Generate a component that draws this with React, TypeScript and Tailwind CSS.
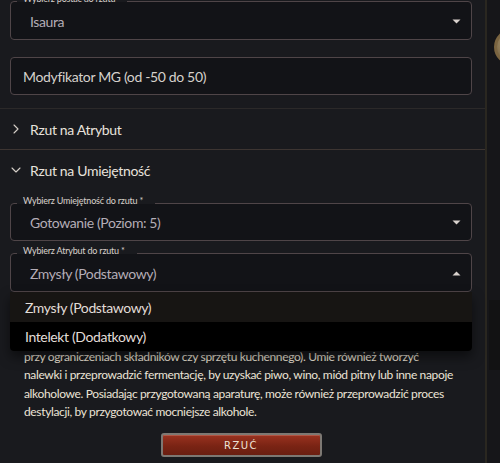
import { ChevronDown, ChevronRight } from 'lucide-react';

function Caret({ up = false }: { up?: boolean }) {
  return (
    <svg width="9" height="5" viewBox="0 0 9 5" className="shrink-0">
      {up ? <path d="M0.5 4.5 4.5 0.5l4 4z" fill="#d9d2ce" /> : <path d="M.5.5h8l-4 4z" fill="#d9d2ce" />}
    </svg>
  );
}

function SelectField({
  label,
  value,
  open = false,
  height = 'h-[38px]',
}: {
  label: string;
  value: string;
  open?: boolean;
  height?: string;
}) {
  return (
    <div className={`relative ${height} rounded-[4px] bg-[#121317]`}>
      <fieldset className="pointer-events-none absolute inset-x-0 -top-[6px] bottom-0 m-0 rounded-[4px] border border-[#4f4548] px-[6px]">
        <legend className="pl-[6px] pr-[12px] text-[9px] leading-[11px] tracking-[-0.2px] text-[#d8d1cb]">
          <span className="relative -top-[3px]">{label}</span>
        </legend>
      </fieldset>
      <div className="flex h-full items-center justify-between pl-[20px] pr-[11px]">
        <span className="text-[14px] tracking-[-0.38px] text-[#b4adb6]">{value}</span>
        <Caret up={open} />
      </div>
    </div>
  );
}

function AccordionHeader({ title, open = false }: { title: string; open?: boolean }) {
  return (
    <div className="flex h-[40px] items-center gap-[6px] pl-[8px]">
      {open ? (
        <ChevronDown size={16} strokeWidth={1.6} color="#d6cfc9" />
      ) : (
        <ChevronRight size={16} strokeWidth={1.6} color="#d6cfc9" />
      )}
      <span className="text-[14px] tracking-[-0.33px] text-[#e8e2dc]">{title}</span>
    </div>
  );
}

export default function App() {
  return (
    <div className="flex h-[463px] w-[500px] overflow-hidden bg-[#191a1e] font-['Lato','Noto_Sans',sans-serif]">
      <div className="w-[487px] shrink-0 border-r-2 border-[#2a2720]">
        <div className="pb-[13px] pl-[10px] pr-[13px] pt-[2px]">
          <SelectField label="Wybierz postać do rzutu" value="Isaura" />
          <div className="mt-[17px] flex h-[38px] items-center rounded-[4px] border border-[#4f4548] bg-[#121317] pl-[12px]">
            <span className="text-[14px] tracking-[-0.35px] text-[#d6d1cc]">Modyfikator MG (od -50 do 50)</span>
          </div>
        </div>
        <div className="border-t border-[#2b2929]" />
        <AccordionHeader title="Rzut na Atrybut" />
        <div className="border-t border-[#3d3532]" />
        <AccordionHeader title="Rzut na Umiejętność" open />
        <div className="pl-[10px] pr-[13px] pt-[14px]">
          <SelectField label="Wybierz Umiejętność do rzutu *" value="Gotowanie (Poziom: 5)" height="h-[37px]" />
          <div className="relative mt-[13px]">
            <SelectField label="Wybierz Atrybut do rzutu *" value="Zmysły (Podstawowy)" open />
            <ul className="absolute inset-x-0 top-full z-10 overflow-hidden rounded-b-[4px] shadow-[0_6px_12px_rgba(0,0,0,0.5)]">
              <li className="flex h-[30px] items-center bg-[#171513] pl-[15px] text-[14px] tracking-[-0.38px] text-[#e2ddd8]">
                Zmysły (Podstawowy)
              </li>
              <li className="flex h-[29px] items-center bg-black pl-[15px] text-[14px] tracking-[-0.38px] text-[#e2ddd8]">
                Intelekt (Dodatkowy)
              </li>
            </ul>
          </div>
          <p className="mt-[19px] px-[14px] text-[12px] leading-[18.4px] tracking-[-0.35px] text-[#ebe3d6]">
            Postać potrafi przyrządzić smaczne i sycące posiłki z tego, co ma pod ręką, a jej potrawy dodają
            sił całej drużynie. Radzi sobie nawet w polu (np.
            <br />
            przy ograniczeniach składników czy sprzętu kuchennego). Umie również tworzyć nalewki i przeprowadzić
            fermentację, by uzyskać piwo, wino, miód pitny lub inne napoje alkoholowe. Posiadając przygotowaną
            aparaturę, może również przeprowadzić proces destylacji, by przygotować mocniejsze alkohole.
          </p>
          <div className="mt-[12px] flex justify-center">
            <button className="flex h-[24px] w-[161px] items-center justify-center rounded-[3px] border-2 border-[#7d7873] bg-[linear-gradient(to_bottom,#9a3220,#7a2414_55%,#6a1e11)] shadow-[inset_0_1px_0_rgba(255,200,180,0.25)]">
              <span className="font-['DejaVu_Sans',sans-serif] text-[10px] font-medium tracking-[1.5px] text-[#eee4d8]">
                RZUĆ
              </span>
            </button>
          </div>
        </div>
      </div>
      <div className="relative flex-1 bg-[#161619]">
        <div className="absolute left-[7px] top-[29px] h-[36px] w-[36px] rounded-full border-[3px] border-[#7a6440] bg-[radial-gradient(circle_at_40%_40%,#b09a70,#5a4a30)]" />
        <div className="absolute left-[2px] top-[300px] h-[70px] w-[20px] bg-[#121213]" />
      </div>
    </div>
  );
}
